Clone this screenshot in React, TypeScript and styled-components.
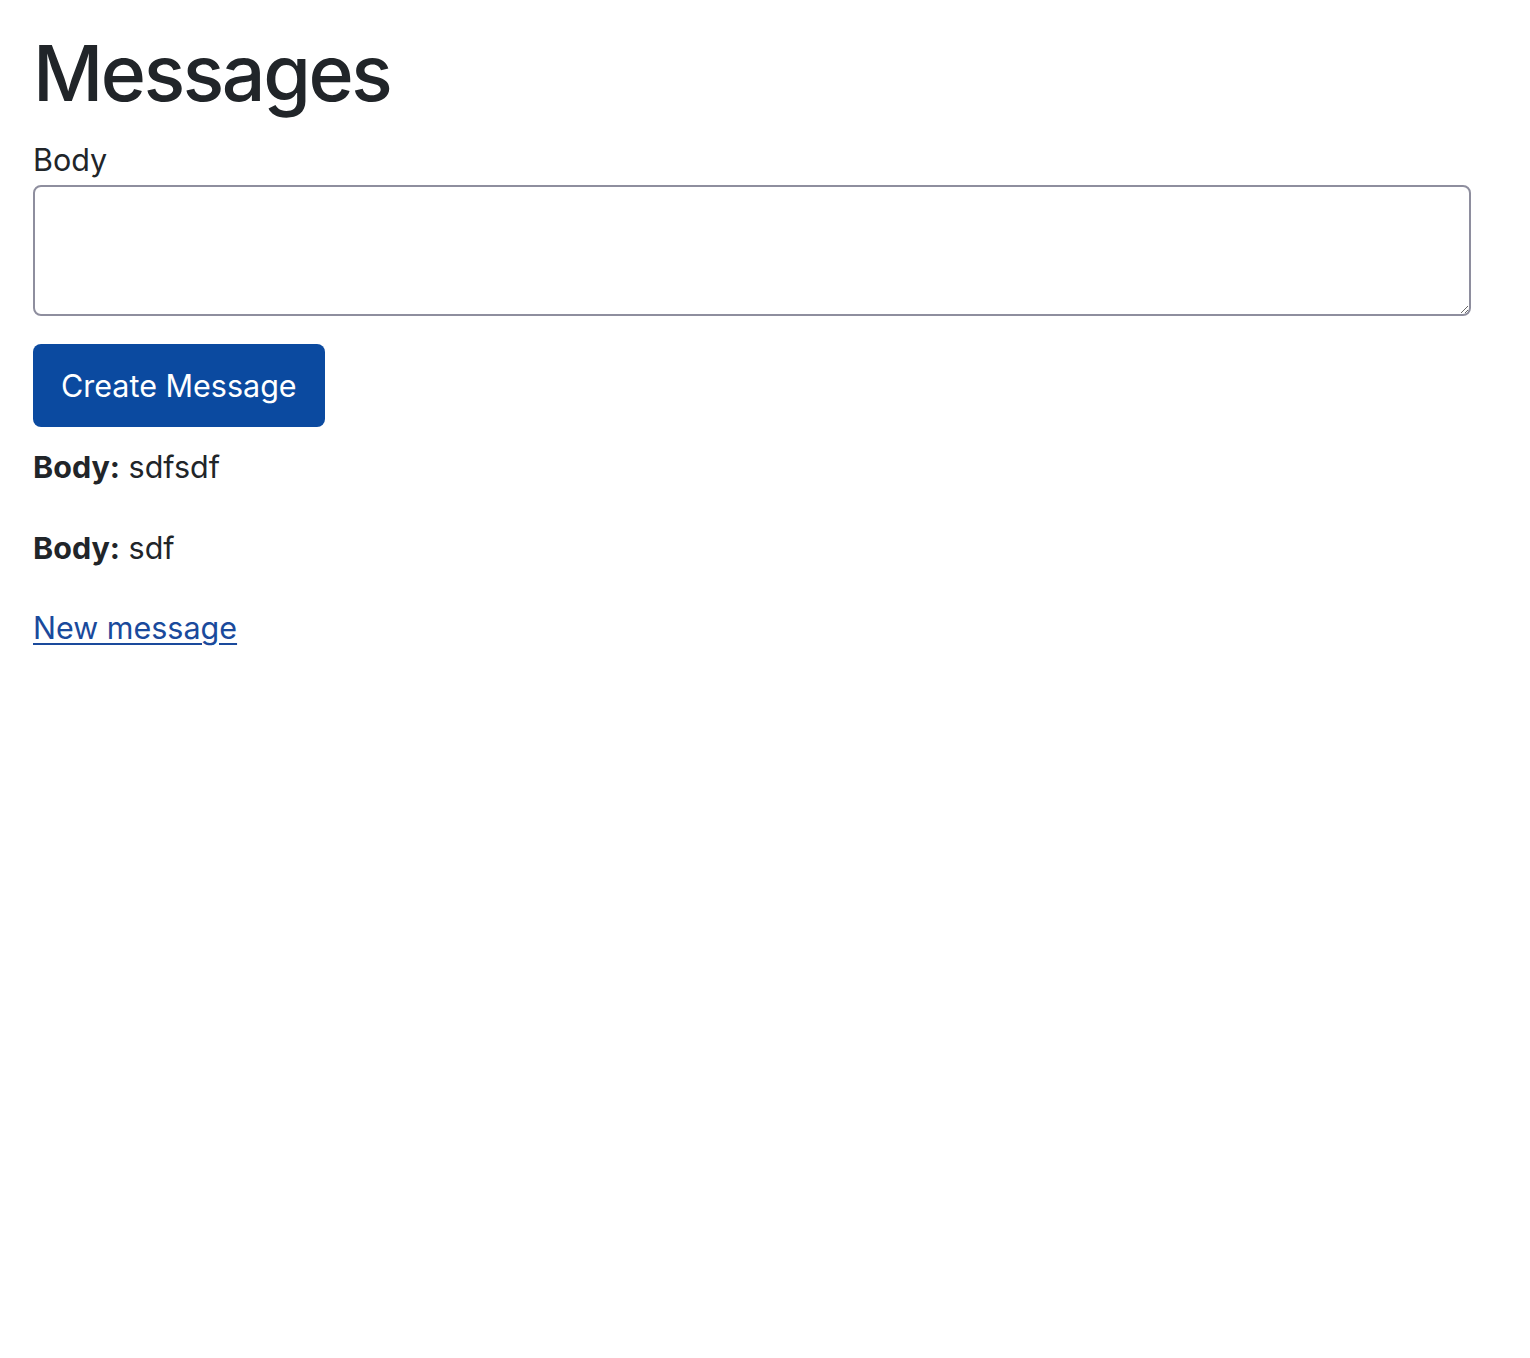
import React from "react";
import styled, { createGlobalStyle } from "styled-components";

const Global = createGlobalStyle`
  html, body { margin: 0; padding: 0; background: #fff; }
  body {
    font-family: Inter, "Noto Sans", "Liberation Sans", sans-serif;
    color: #212529;
  }
`;

const Page = styled.main`
  padding: 27px 59px 0 33px;
  display: flex;
  flex-direction: column;
  align-items: flex-start;
`;

const Title = styled.h1`
  margin: 0;
  font-size: 77px;
  font-weight: 500;
  line-height: 92px;
  letter-spacing: -2.4px;
`;

const Form = styled.form`
  display: flex;
  flex-direction: column;
  align-items: flex-start;
  align-self: stretch;
  margin-top: 23px;
`;

const Label = styled.label`
  font-size: 30.5px;
  line-height: 36px;
  margin-bottom: 7px;
`;

const TextArea = styled.textarea`
  box-sizing: border-box;
  width: 100%;
  height: 131px;
  border: 2px solid #8e8e9e;
  border-radius: 8px;
  font-family: inherit;
  font-size: 30px;
  padding: 10px 16px;
  margin: 0;
  resize: vertical;
  outline: none;
`;

const Button = styled.button`
  margin-top: 28px;
  height: 83px;
  padding: 0 28px;
  border: none;
  border-radius: 8px;
  background: #0b4aa0;
  color: #fff;
  font-family: inherit;
  font-size: 30.5px;
  font-weight: 400;
  cursor: pointer;
`;

const MessageList = styled.section`
  display: flex;
  flex-direction: column;
  gap: 45px;
  margin-top: 22px;
`;

const Message = styled.p`
  margin: 0;
  font-size: 30.5px;
  line-height: 36px;
`;

const Strong = styled.strong`
  font-weight: 700;
`;

const Link = styled.a`
  margin-top: 44px;
  font-size: 30.5px;
  line-height: 36px;
  color: #1a4a9c;
  text-decoration: underline;
  text-decoration-thickness: 2px;
  text-underline-offset: 4px;
`;

const messages = ["sdfsdf", "sdf"];

export default function App() {
  return (
    <>
      <Global />
      <Page>
        <Title>Messages</Title>
        <Form onSubmit={(e) => e.preventDefault()}>
          <Label htmlFor="body">Body</Label>
          <TextArea id="body" />
          <Button type="submit">Create Message</Button>
        </Form>
        <MessageList>
          {messages.map((m, i) => (
            <Message key={i}>
              <Strong>Body:</Strong> {m}
            </Message>
          ))}
        </MessageList>
        <Link href="#">New message</Link>
      </Page>
    </>
  );
}
